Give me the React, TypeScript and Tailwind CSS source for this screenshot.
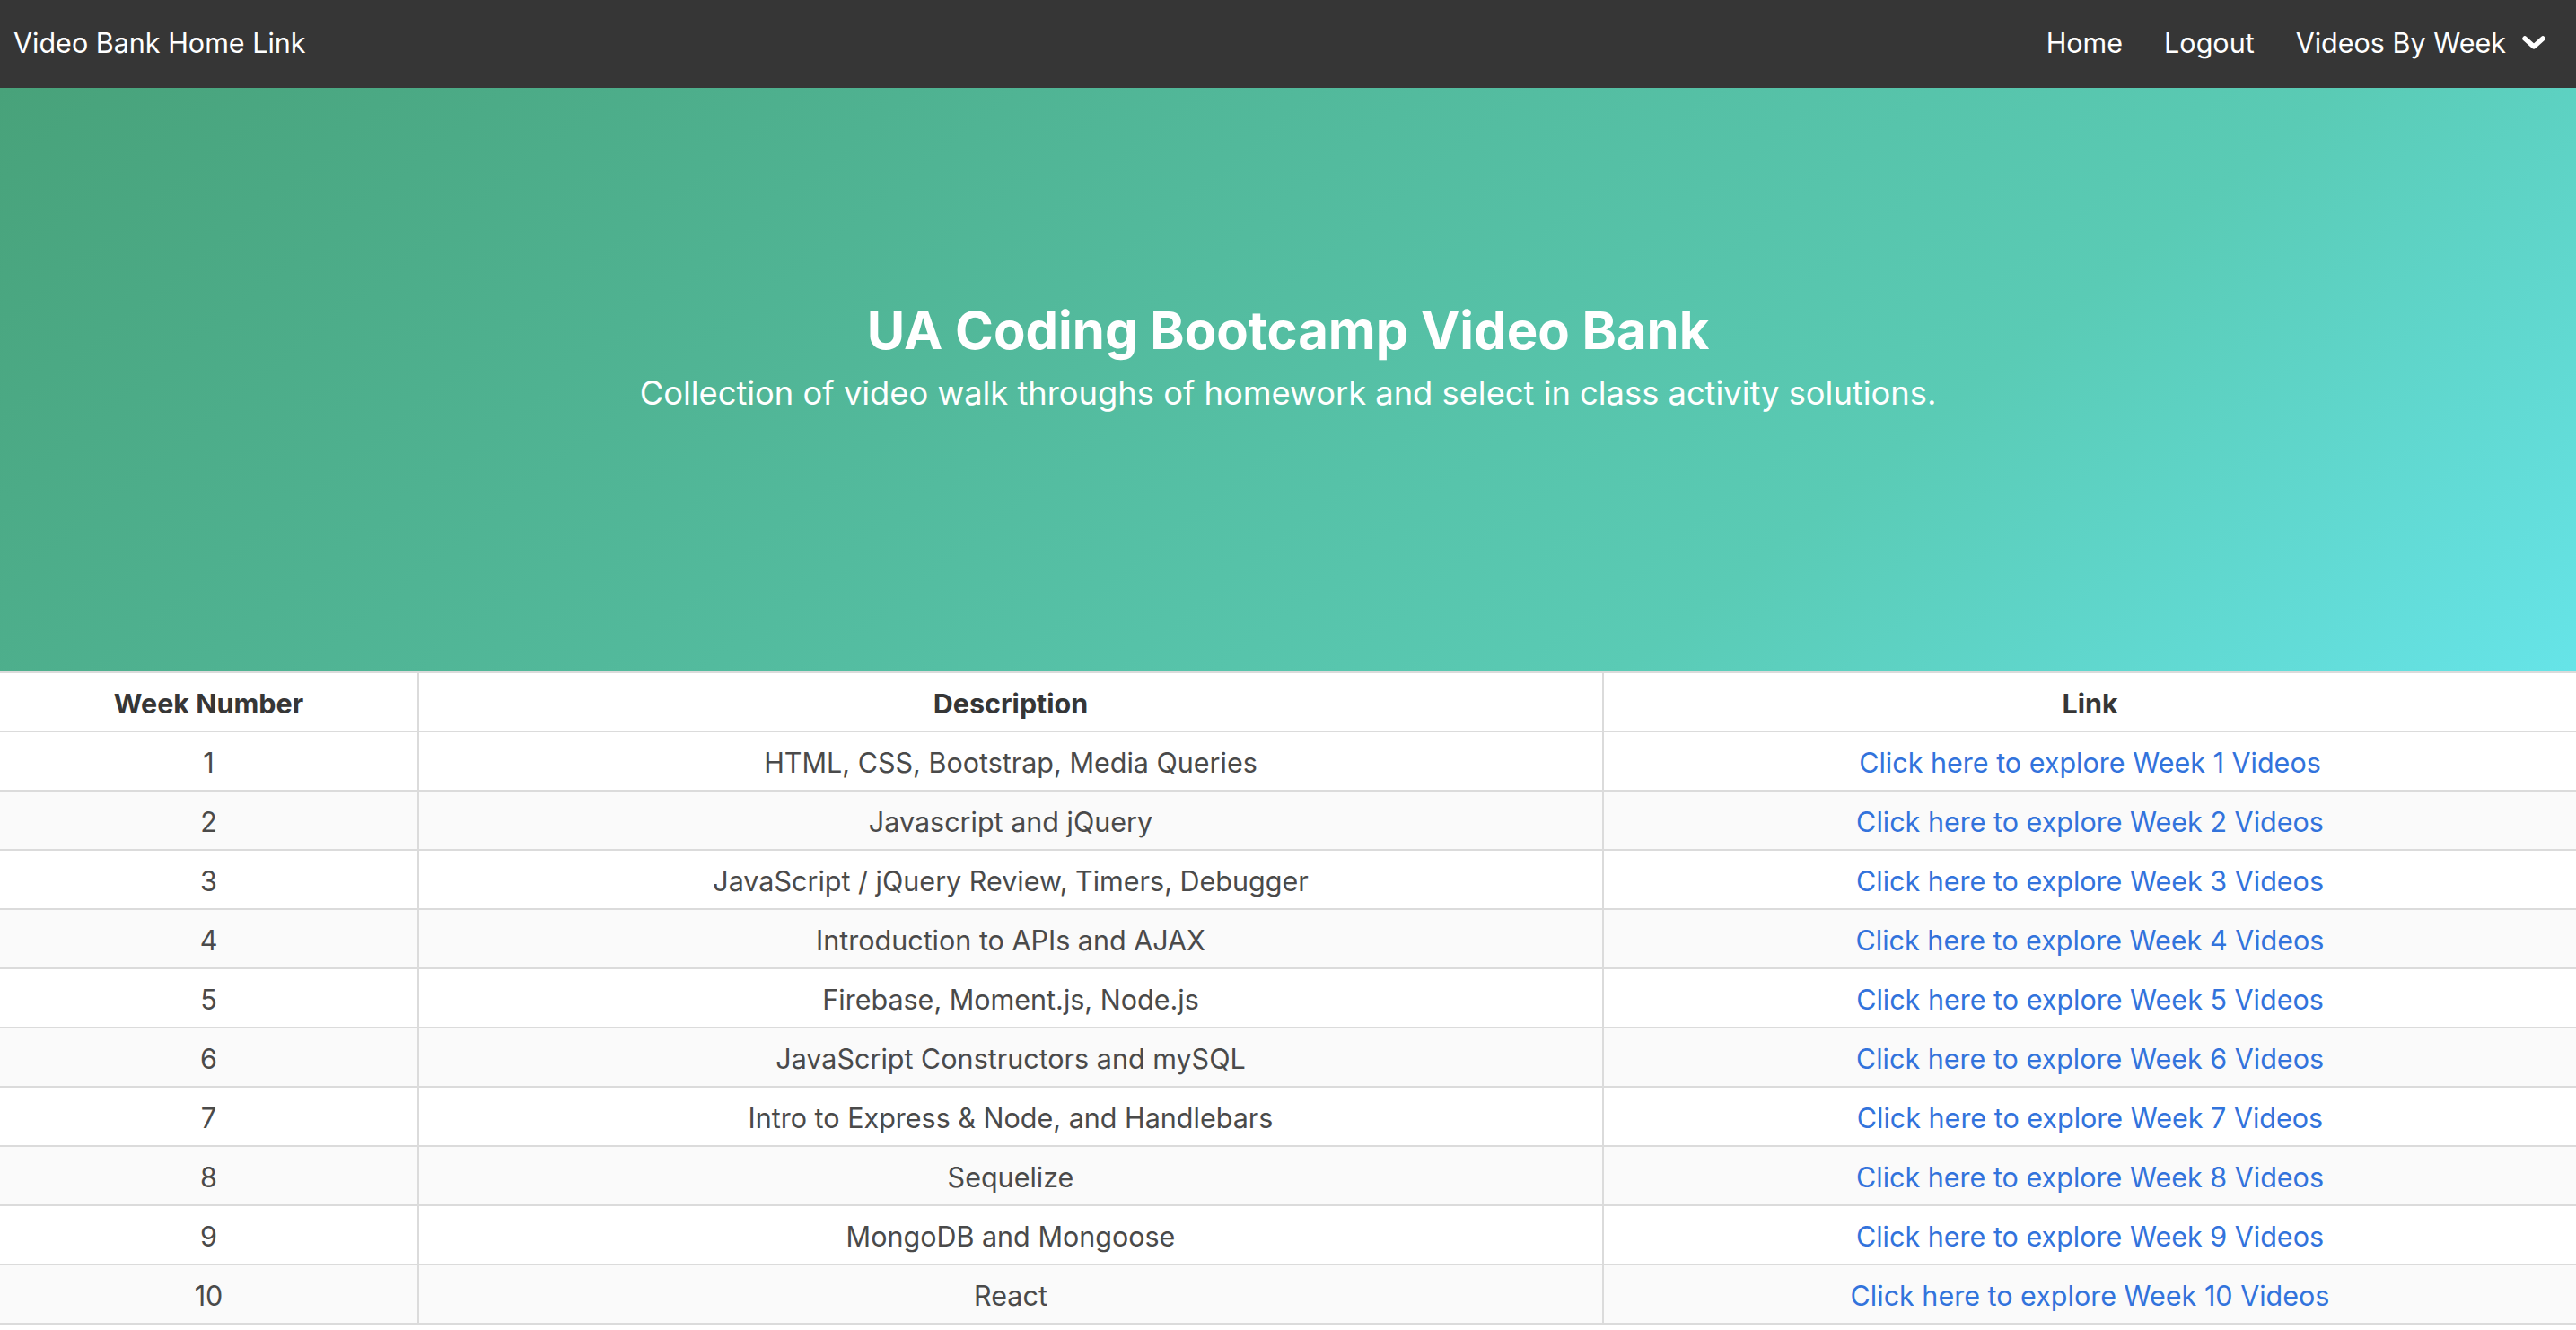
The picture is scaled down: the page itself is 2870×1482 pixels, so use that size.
import React from 'react';

const weeks = [
  { n: 1, desc: 'HTML, CSS, Bootstrap, Media Queries' },
  { n: 2, desc: 'Javascript and jQuery' },
  { n: 3, desc: 'JavaScript / jQuery Review, Timers, Debugger' },
  { n: 4, desc: 'Introduction to APIs and AJAX' },
  { n: 5, desc: 'Firebase, Moment.js, Node.js' },
  { n: 6, desc: 'JavaScript Constructors and mySQL' },
  { n: 7, desc: 'Intro to Express & Node, and Handlebars' },
  { n: 8, desc: 'Sequelize' },
  { n: 9, desc: 'MongoDB and Mongoose' },
  { n: 10, desc: 'React' },
];

const Navbar = () => (
  <nav className="flex items-center justify-between h-[98px] bg-[#363636] text-white text-[30.5px] pl-[15px] pr-[33px]">
    <a href="#" className="-mt-[2px]">Video Bank Home Link</a>
    <div className="flex items-center -mt-[2px]">
      <a href="#" className="mr-[46px]">Home</a>
      <a href="#" className="mr-[46px]">Logout</a>
      <a href="#" className="flex items-center">
        Videos By Week
        <svg width="28" height="18" viewBox="0 0 28 18" className="ml-[17px]">
          <polyline points="4,4 14,13 24,4" fill="none" stroke="white" strokeWidth="5.5" strokeLinecap="round" strokeLinejoin="round" />
        </svg>
      </a>
    </div>
  </nav>
);

const Hero = () => (
  <section className="h-[650px] flex flex-col items-center justify-center pb-[50px] text-white bg-[linear-gradient(141deg,#48a27a_0%,#5acbb5_71%,#66e4e8_100%)]">
    <h1 className="text-[58px] font-bold leading-[65px]">UA Coding Bootcamp Video Bank</h1>
    <h2 className="text-[36.3px] leading-[45px] mt-[15px]">
      Collection of video walk throughs of homework and select in class activity solutions.
    </h2>
  </section>
);

const cell = 'h-[66px] border-b-2 border-[#dbdbdb] text-center align-middle p-0 pt-[3px]';

export default function App() {
  return (
    <div className="min-h-screen bg-white font-['Inter','Noto_Sans',sans-serif]">
      <Navbar />
      <Hero />
      <table className="w-full table-fixed border-separate border-spacing-0 border-t-2 border-[#dbdbdb] text-[30.5px]">
        <thead>
          <tr className="text-[#363636]">
            <th className={`${cell} w-[467px] border-r-2 font-bold`}>Week Number</th>
            <th className={`${cell} w-[1320px] border-r-2 font-bold`}>Description</th>
            <th className={`${cell} font-bold`}>Link</th>
          </tr>
        </thead>
        <tbody>
          {weeks.map((w, i) => (
            <tr key={w.n} className={i % 2 === 1 ? 'bg-[#fafafa] text-[#4a4a4a]' : 'bg-white text-[#4a4a4a]'}>
              <td className={`${cell} border-r-2`}>{w.n}</td>
              <td className={`${cell} border-r-2`}>{w.desc}</td>
              <td className={cell}>
                <a href="#" className="text-[#3273dc]">Click here to explore Week {w.n} Videos</a>
              </td>
            </tr>
          ))}
        </tbody>
      </table>
    </div>
  );
}
